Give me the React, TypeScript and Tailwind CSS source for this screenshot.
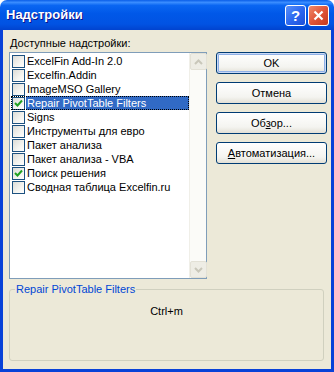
import React from 'react';

type Item = { label: string; checked: boolean; selected?: boolean };

const items: Item[] = [
  { label: 'ExcelFin Add-In 2.0', checked: false },
  { label: 'Excelfin.Addin', checked: false },
  { label: 'ImageMSO Gallery', checked: false },
  { label: 'Repair PivotTable Filters', checked: true, selected: true },
  { label: 'Signs', checked: false },
  { label: 'Инструменты для евро', checked: false },
  { label: 'Пакет анализа', checked: false },
  { label: 'Пакет анализа - VBA', checked: false },
  { label: 'Поиск решения', checked: true },
  { label: 'Сводная таблица Excelfin.ru', checked: false },
];

const CheckBox = ({ checked }: { checked: boolean }) => (
  <div className="w-[13px] h-[13px] shrink-0 border border-[#1C5180] bg-[linear-gradient(135deg,#DCDCD7_0%,#F4F4F0_60%,#FFFFFF_100%)] flex items-center justify-center">
    {checked && (
      <svg width="9" height="9" viewBox="0 0 9 9">
        <path d="M1 4 L3.5 6.5 L8 1.5" fill="none" stroke="#21A121" strokeWidth="2" />
      </svg>
    )}
  </div>
);

const Arrow = ({ up }: { up: boolean }) => (
  <div className="w-[17px] h-[17px] rounded-[2px] bg-[#EEEDE5] border border-[#E3E1D6] flex items-center justify-center">
    <svg width="9" height="6" viewBox="0 0 9 6">
      <path d={up ? 'M1 5 L4.5 1.5 L8 5' : 'M1 1 L4.5 4.5 L8 1'} fill="none" stroke="#C9C7BA" strokeWidth="2" />
    </svg>
  </div>
);

const XpButton = ({ children, primary }: { children: React.ReactNode; primary?: boolean }) => (
  <button
    className={
      'w-[111px] h-[22px] rounded-[3px] border border-[#003C74] text-[11px] text-black bg-[linear-gradient(#FFFFFF_0%,#F4F4F0_70%,#E3E0D5_100%)] ' +
      (primary ? 'shadow-[inset_0_0_0_1px_#CAD9F5,inset_0_0_0_2px_#8FB0E6]' : '')
    }
  >
    {children}
  </button>
);

export default function App() {
  return (
    <div className="w-[334px] h-[372px] flex flex-col font-['Liberation_Sans',Arial,sans-serif] select-none">
      {/* title bar */}
      <div className="h-[30px] shrink-0 rounded-t-[7px] bg-[linear-gradient(#0A5EE8_0%,#3A8DFF_8%,#0A66F2_18%,#0058E8_45%,#0153E3_80%,#0143CF_100%)] flex items-center pl-[6px] pr-[5px]">
        <span className="text-white font-bold text-[13px] [text-shadow:1px_1px_0_#0F1089] flex-1">Надстройки</span>
        <div className="flex gap-[2px]">
          <div className="w-[21px] h-[21px] rounded-[3px] border border-white bg-[linear-gradient(135deg,#5A90F8_0%,#2D69F0_50%,#1C4FD8_100%)] flex items-center justify-center text-white font-bold text-[15px] leading-none">
            ?
          </div>
          <div className="w-[21px] h-[21px] rounded-[3px] border border-white bg-[linear-gradient(135deg,#F08A6A_0%,#E0553A_50%,#C4391E_100%)] flex items-center justify-center">
            <svg width="11" height="11" viewBox="0 0 11 11">
              <path d="M1.5 1.5 L9.5 9.5 M9.5 1.5 L1.5 9.5" stroke="white" strokeWidth="2.2" />
            </svg>
          </div>
        </div>
      </div>

      {/* body */}
      <div className="flex-1 flex flex-col bg-[#ECE9D8] border-x-[3px] border-b-[3px] border-[#0842D8] pl-[6px] pt-[5px]">
        <div className="flex">
          <div className="flex flex-col">
            <div className="text-[11px] h-[17px] pl-[1px] text-black">
              <span className="underline">Д</span>оступные надстройки:
            </div>
            <div className="w-[198px] h-[227px] border border-[#7F9DB9] bg-white flex">
              <div className="flex-1 pt-[1px] pl-[1px]">
                {items.map((it) => (
                  <div
                    key={it.label}
                    className={
                      'h-[14px] flex items-center ' +
                      (it.selected ? 'outline outline-1 outline-dotted outline-black -outline-offset-1' : '')
                    }
                  >
                    <div className="pl-[1px] pr-[1px]">
                      <CheckBox checked={it.checked} />
                    </div>
                    <div
                      className={
                        'flex-1 h-[14px] text-[11px] leading-[14px] pl-[1px] whitespace-nowrap ' +
                        (it.selected ? 'bg-[#316AC5] text-white' : 'text-black')
                      }
                    >
                      {it.label}
                    </div>
                  </div>
                ))}
              </div>
              <div className="w-[17px] bg-[#FBFBF8] border-l border-[#F0EFE8] flex flex-col justify-between">
                <Arrow up />
                <Arrow up={false} />
              </div>
            </div>
          </div>
          <div className="flex flex-col gap-[8px] pl-[9px] pt-[17px]">
            <XpButton primary>OK</XpButton>
            <XpButton>Отмена</XpButton>
            <XpButton>
              Об<span className="underline">з</span>ор...
            </XpButton>
            <XpButton>
              <span className="underline">А</span>втоматизация...
            </XpButton>
          </div>
        </div>

        <fieldset className="mt-[4px] w-[315px] h-[78px] border border-[#D0D0BF] rounded-[3px] px-[5px] pb-0 pt-0">
          <legend className="text-[11px] text-[#0046D5] px-[1px] leading-[13px]">Repair PivotTable Filters</legend>
          <div className="text-[11px] text-black text-center pt-[7px]">Ctrl+m</div>
        </fieldset>
      </div>
    </div>
  );
}
